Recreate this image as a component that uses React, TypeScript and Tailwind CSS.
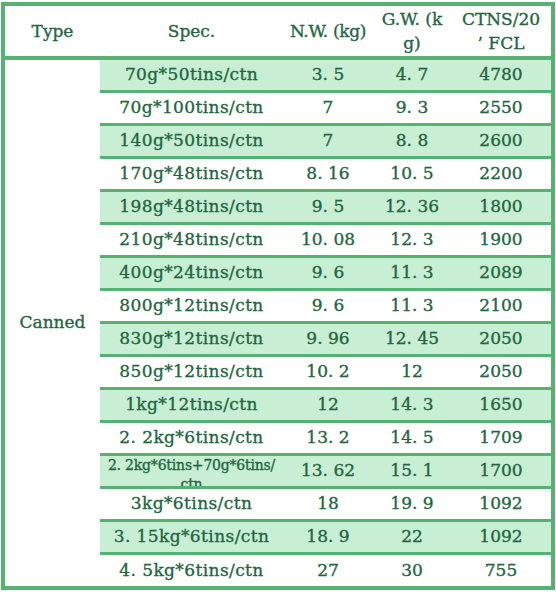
const rows: [string, string, string, string][] = [
  ['70g*50tins/ctn', '3. 5', '4. 7', '4780'],
  ['70g*100tins/ctn', '7', '9. 3', '2550'],
  ['140g*50tins/ctn', '7', '8. 8', '2600'],
  ['170g*48tins/ctn', '8. 16', '10. 5', '2200'],
  ['198g*48tins/ctn', '9. 5', '12. 36', '1800'],
  ['210g*48tins/ctn', '10. 08', '12. 3', '1900'],
  ['400g*24tins/ctn', '9. 6', '11. 3', '2089'],
  ['800g*12tins/ctn', '9. 6', '11. 3', '2100'],
  ['830g*12tins/ctn', '9. 96', '12. 45', '2050'],
  ['850g*12tins/ctn', '10. 2', '12', '2050'],
  ['1kg*12tins/ctn', '12', '14. 3', '1650'],
  ['2. 2kg*6tins/ctn', '13. 2', '14. 5', '1709'],
  ['2. 2kg*6tins+70g*6tins/|ctn', '13. 62', '15. 1', '1700'],
  ['3kg*6tins/ctn', '18', '19. 9', '1092'],
  ['3. 15kg*6tins/ctn', '18. 9', '22', '1092'],
  ['4. 5kg*6tins/ctn', '27', '30', '755'],
];

export default function App() {
  return (
    <div className="w-[556px] h-[592px] bg-white pl-px pt-[2px] font-['DejaVu_Serif',serif] text-[#1f6640] [-webkit-text-stroke:0.35px_#1f6640]">
      <div className="w-[554px] h-[588px] border-4 border-[#56b273] flex flex-col">
        {/* header */}
        <div className="h-[54px] shrink-0 border-b-4 border-[#56b273] grid grid-cols-[95px_183px_90px_78px_100px] items-center text-center text-[17px] leading-[24px]">
          <div>Type</div>
          <div>Spec.</div>
          <div className="tracking-[-0.3px]">N.W. (kg)</div>
          <div>
            G.W. (k
            <br />
            g)
          </div>
          <div>
            CTNS/20
            <br />’ FCL
          </div>
        </div>

        {/* body */}
        <div className="flex flex-1">
          <div className="w-[95px] shrink-0 flex items-center justify-center text-[17px]">Canned</div>
          <div className="flex-1 flex flex-col">
            {rows.map((r, i) => {
              const last = i === rows.length - 1;
              const lines = r[0].split('|');
              return (
                <div
                  key={i}
                  className={`grid grid-cols-[183px_90px_78px_100px] items-center text-center text-[17px] ${
                    last ? 'h-[31px]' : 'h-[33px] border-b-[3px] border-[#56b273]'
                  } ${i % 2 === 0 ? 'bg-[#c8eed4]' : 'bg-white'}`}
                >
                  {lines.length > 1 ? (
                    <div className="h-[30px] overflow-hidden text-[14px] leading-[19px] tracking-[-0.2px] whitespace-nowrap">
                      {lines[0]}
                      <br />
                      {lines[1]}
                    </div>
                  ) : (
                    <div className="whitespace-nowrap tracking-[0.4px]">{r[0]}</div>
                  )}
                  <div>{r[1]}</div>
                  <div>{r[2]}</div>
                  <div>{r[3]}</div>
                </div>
              );
            })}
          </div>
        </div>
      </div>
    </div>
  );
}
